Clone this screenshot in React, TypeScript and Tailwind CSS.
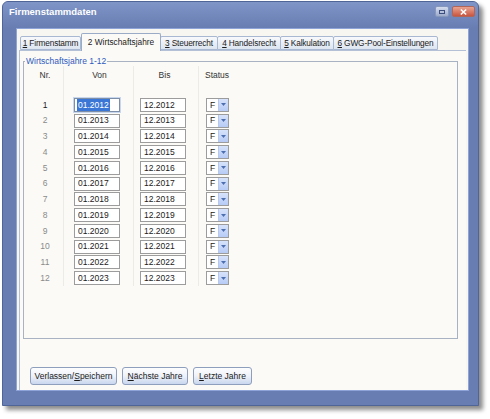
import { ReactNode } from 'react';

const rows = Array.from({ length: 12 }, (_, i) => ({
  nr: i + 1,
  von: `01.${2012 + i}`,
  bis: `12.${2012 + i}`,
  status: 'F',
}));

function Acc({ children }: { children: ReactNode }) {
  return <span className="underline underline-offset-[1px]">{children}</span>;
}

function Tab({ children, width, active }: { children: ReactNode; width: string; active?: boolean }) {
  return (
    <div
      className={
        active
          ? `${width} h-[18px] -mb-px relative z-10 flex items-center justify-center border border-b-0 border-[#9aabc8] bg-[#fbfaf6] rounded-t-[2px] whitespace-nowrap`
          : `${width} h-[14px] flex items-center justify-center border border-[#a9b8d2] bg-gradient-to-b from-[#f8f9fb] to-[#dde5f0] rounded-t-[2px] -ml-px whitespace-nowrap tracking-[-0.15px]`
      }
    >
      {children}
    </div>
  );
}

function Field({ value, focused }: { value: string; focused?: boolean }) {
  return (
    <div
      className={`h-[14px] w-[46px] bg-white flex items-center pl-[3px] ${
        focused ? 'border border-[#7d8fa8] outline outline-1 outline-[#c9d7ee]' : 'border border-[#9c9c9c]'
      }`}
    >
      {focused ? <span className="bg-[#3a76d6] text-white px-px -ml-px">{value}</span> : value}
    </div>
  );
}

function StatusBox({ value }: { value: string }) {
  return (
    <div className="h-[14px] w-[23px] flex border border-[#9c9c9c] bg-white">
      <div className="w-[11px] flex items-center justify-center">{value}</div>
      <div className="flex-1 bg-gradient-to-b from-[#d7e3fb] to-[#b7cbf5] border-l border-[#b8c8ea] flex items-center justify-center">
        <svg width="5" height="3" viewBox="0 0 5 3">
          <path d="M0 0h5L2.5 3z" fill="#4d6fb0" />
        </svg>
      </div>
    </div>
  );
}

function Btn({ children, width }: { children: ReactNode; width: string }) {
  return (
    <div
      className={`${width} h-[18px] flex items-center justify-center rounded-[3px] border border-[#8e9fbd] bg-gradient-to-b from-[#fdfdfe] via-[#eef2f9] to-[#c9d6ee] text-[#1a1a1a]`}
    >
      {children}
    </div>
  );
}

export default function App() {
  return (
    <div className="w-[490px] h-[419px] bg-white font-['Liberation_Sans',Arial,sans-serif] text-[8.5px] text-[#1b1b1b] pt-[1px] pl-[2px]">
      {/* Window */}
      <div className="w-[477px] h-[405px] rounded-t-[6px] bg-[#687db1] border border-[#4f6497] shadow-[4px_4px_4px_rgba(0,0,0,0.45)] flex flex-col">
        {/* Title bar */}
        <div className="h-[26px] rounded-t-[5px] bg-gradient-to-b from-[#7f95c8] to-[#687db1] flex items-start justify-between pl-[6px] pr-[3px] pt-[3px]">
          <span className="text-white font-bold text-[9.5px] leading-[14px]">Firmenstammdaten</span>
          <div className="flex gap-[3px] mt-[1px]">
            <div className="w-[14px] h-[11px] rounded-[2px] border border-[#8798bd] bg-gradient-to-b from-[#d5dced] to-[#9eaccb] flex items-center justify-center">
              <div className="w-[6px] h-[4px] border border-[#3b4e7d]" />
            </div>
            <div className="w-[23px] h-[11px] rounded-[2px] border border-[#b0675a] bg-gradient-to-b from-[#e9a391] to-[#c8553f] flex items-center justify-center">
              <svg width="7" height="6" viewBox="0 0 7 6">
                <path d="M0.8 0.5L6.2 5.5M6.2 0.5L0.8 5.5" stroke="#fff" strokeWidth="1.5" />
              </svg>
            </div>
          </div>
        </div>

        {/* Client area */}
        <div className="ml-[13px] mr-[9px] mb-[14px] flex-1 bg-[#f7f6f0] border border-[#8ea4d8] flex flex-col px-[2px] pt-[3px]">
          {/* Tabs */}
          <div className="flex items-end pl-[2px] h-[18px] text-[8.3px]">
            <Tab width="w-[61px]">
              <Acc>1</Acc>&nbsp;Firmenstamm
            </Tab>
            <Tab width="w-[80px]" active>
              2 Wirtschaftsjahre
            </Tab>
            <Tab width="w-[58px]">
              <Acc>3</Acc>&nbsp;Steuerrecht
            </Tab>
            <Tab width="w-[64px]">
              <Acc>4</Acc>&nbsp;Handelsrecht
            </Tab>
            <Tab width="w-[54px]">
              <Acc>5</Acc>&nbsp;Kalkulation
            </Tab>
            <Tab width="w-[105px]">
              <Acc>6</Acc>&nbsp;GWG-Pool-Einstellungen
            </Tab>
          </div>

          {/* Tab panel */}
          <div className="flex-1 border-t border-l border-[#b4c0d6] bg-[#fbfaf6] flex flex-col pl-[3px] pr-[8px] pt-[10px] pb-[5px]">
            {/* Group box */}
            <fieldset className="h-[283px] border border-[#a9b2c3] px-0 pb-0 m-0 -mt-[5px]">
              <legend className="ml-[1px] px-[1px] text-[#2f5bbf] leading-[10px]">Wirtschaftsjahre 1-12</legend>
              <div className="flex h-full">
                {/* Nr */}
                <div className="w-[40px] border-r border-[#ecebe5] flex flex-col items-center pl-[3px]">
                  <div className="h-[13px] mt-[3px] flex items-center text-[#333]">Nr.</div>
                  <div className="mt-[15px] flex flex-col">
                    {rows.map((r) => (
                      <div
                        key={r.nr}
                        className={`h-[15.75px] flex items-center justify-center ${r.nr === 1 ? 'text-[#1b1b1b]' : 'text-[#8a8a8a]'}`}
                      >
                        {r.nr}
                      </div>
                    ))}
                  </div>
                </div>
                {/* Von */}
                <div className="w-[70px] border-r border-[#ecebe5] flex flex-col">
                  <div className="h-[13px] mt-[3px] flex items-center justify-center text-[#333] pl-[2px]">Von</div>
                  <div className="mt-[15px] flex flex-col pl-[10px]">
                    {rows.map((r) => (
                      <div key={r.nr} className="h-[15.75px] flex items-center">
                        <Field value={r.von} focused={r.nr === 1} />
                      </div>
                    ))}
                  </div>
                </div>
                {/* Bis */}
                <div className="w-[65px] border-r border-[#ecebe5] flex flex-col">
                  <div className="h-[13px] mt-[3px] flex items-center justify-center text-[#333] pr-[3px]">Bis</div>
                  <div className="mt-[15px] flex flex-col pl-[6px]">
                    {rows.map((r) => (
                      <div key={r.nr} className="h-[15.75px] flex items-center">
                        <Field value={r.bis} />
                      </div>
                    ))}
                  </div>
                </div>
                {/* Status */}
                <div className="w-[50px] flex flex-col">
                  <div className="h-[13px] mt-[3px] flex items-center pl-[6px] text-[#333]">Status</div>
                  <div className="mt-[15px] flex flex-col pl-[7px]">
                    {rows.map((r) => (
                      <div key={r.nr} className="h-[15.75px] flex items-center">
                        <StatusBox value={r.status} />
                      </div>
                    ))}
                  </div>
                </div>
              </div>
            </fieldset>

            <div className="flex-1" />

            {/* Buttons */}
            <div className="flex gap-[5px] pl-[7px]">
              <Btn width="w-[87px]">
                Verlassen/<Acc>S</Acc>peichern
              </Btn>
              <Btn width="w-[66px]">
                <Acc>N</Acc>ächste Jahre
              </Btn>
              <Btn width="w-[59px]">
                <Acc>L</Acc>etzte Jahre
              </Btn>
            </div>
          </div>
        </div>
      </div>
    </div>
  );
}
